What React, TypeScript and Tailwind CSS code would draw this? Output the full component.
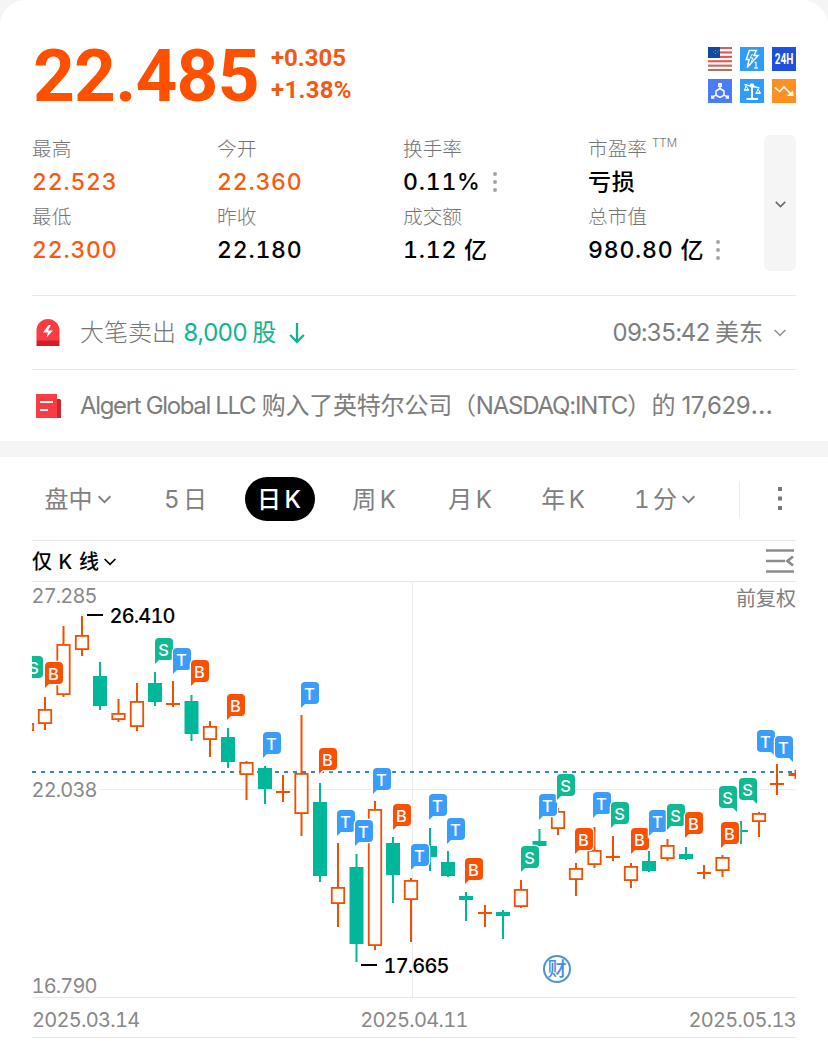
import { useState } from 'react';

type Signal = 'B' | 'S' | 'T';

interface Candle {
  x: number;
  high: number;
  top: number;
  bottom: number;
  low: number;
  up: boolean;
}

interface Marker {
  x: number;
  y: number;
  type: Signal;
  right?: boolean;
}

const UP = '#f25000';
const DOWN = '#00b899';

const signalColors: Record<Signal, string> = {
  B: '#fb5000',
  S: '#0fba93',
  T: '#3a9dfb',
};

// [x, high, top, bottom, low, up]
const candles: Candle[] = (
  [
    [27, 723, 723, 731, 731, 1],
    [45, 697, 709, 724, 730, 1],
    [63.5, 626, 644, 695, 697, 1],
    [82, 616, 635, 650, 656, 1],
    [100, 662, 676, 706, 710, 0],
    [118.5, 699, 713, 720, 722, 1],
    [137, 683, 701, 727, 731, 1],
    [155, 672, 683, 702, 706, 0],
    [173, 681, 703, 705, 707, 1],
    [191.5, 695, 701, 734, 741, 0],
    [210, 721, 726, 740, 757, 1],
    [228, 728, 737, 762, 768, 0],
    [246.5, 761, 762, 775, 800, 1],
    [265, 766, 768, 789, 804, 0],
    [283, 775, 791, 793, 802, 1],
    [301.5, 715, 773, 814, 836, 1],
    [320, 783, 802, 876, 882, 0],
    [338, 843, 887, 904, 927, 1],
    [356.5, 854, 867, 944, 962, 0],
    [375, 801, 809, 946, 950, 1],
    [393, 837, 843, 875, 903, 0],
    [411, 878, 880, 900, 942, 1],
    [430, 828, 846, 857, 871, 0],
    [448, 851, 862, 876, 877, 0],
    [466, 892, 896, 900, 921, 0],
    [485, 905, 912, 914, 927, 1],
    [503, 910, 912, 916, 939, 0],
    [521, 880, 889, 907, 908, 1],
    [539.5, 829, 841, 846, 846, 0],
    [558, 808, 811, 829, 835, 1],
    [576, 863, 868, 880, 896, 1],
    [594.5, 827, 850, 865, 868, 1],
    [613, 836, 856, 858, 861, 1],
    [631, 863, 866, 881, 888, 1],
    [649, 851, 861, 871, 872, 0],
    [667.5, 839, 845, 859, 861, 1],
    [686, 847, 854, 859, 860, 0],
    [704, 865, 872, 874, 879, 1],
    [722.5, 855, 857, 871, 877, 1],
    [741, 821, 830, 832, 844, 0],
    [759, 812, 813, 822, 837, 1],
    [777, 764, 783, 785, 795, 1],
    [795.5, 770, 773, 776, 779, 1],
  ] as number[][]
).map(([x, high, top, bottom, low, up]) => ({ x, high, top, bottom, low, up: up === 1 }));

const markers: Marker[] = [
  { x: 25, y: 656, type: 'S' },
  { x: 45, y: 662, type: 'B' },
  { x: 155, y: 638, type: 'S' },
  { x: 173, y: 648, type: 'T' },
  { x: 191, y: 660, type: 'B' },
  { x: 227, y: 694, type: 'B' },
  { x: 263, y: 732, type: 'T' },
  { x: 301, y: 682, type: 'T' },
  { x: 319, y: 748, type: 'B' },
  { x: 337, y: 810, type: 'T' },
  { x: 355, y: 820, type: 'T' },
  { x: 373, y: 768, type: 'T' },
  { x: 393, y: 804, type: 'B' },
  { x: 411, y: 844, type: 'T' },
  { x: 429, y: 794, type: 'T' },
  { x: 447, y: 818, type: 'T' },
  { x: 465, y: 858, type: 'B' },
  { x: 521, y: 846, type: 'S' },
  { x: 539, y: 794, type: 'T' },
  { x: 557, y: 774, type: 'S' },
  { x: 575, y: 828, type: 'B' },
  { x: 593, y: 792, type: 'T' },
  { x: 611, y: 802, type: 'S' },
  { x: 631, y: 828, type: 'B' },
  { x: 649, y: 810, type: 'T' },
  { x: 667, y: 804, type: 'S' },
  { x: 685, y: 812, type: 'B' },
  { x: 721, y: 822, type: 'B' },
  { x: 719, y: 786, type: 'S', right: true },
  { x: 739, y: 778, type: 'S', right: true },
  { x: 757, y: 730, type: 'T', right: true },
  { x: 775, y: 736, type: 'T', right: true },
];

const stats = [
  { label: '最高', value: '22.523', up: true },
  { label: '今开', value: '22.360', up: true },
  { label: '换手率', value: '0.11%', more: true },
  { label: '市盈率', sup: 'TTM', value: '亏损' },
  { label: '最低', value: '22.300', up: true },
  { label: '昨收', value: '22.180' },
  { label: '成交额', value: '1.12 亿' },
  { label: '总市值', value: '980.80 亿', more: true },
];

const tabs = [
  { id: 'intraday', text: '盘中', menu: true },
  { id: '5d', text: '5 日' },
  { id: 'day', text: '日 K' },
  { id: 'week', text: '周 K' },
  { id: 'month', text: '月 K' },
  { id: 'year', text: '年 K' },
  { id: '1m', text: '1 分', menu: true },
];

function Chevron({ className }: { className: string }) {
  return (
    <svg viewBox="0 0 12 8" className={className} fill="none" stroke="currentColor" strokeWidth="1.7">
      <path d="M0.600 1 6 6.400 11.400 1" />
    </svg>
  );
}

function Dots({ className }: { className: string }) {
  return (
    <svg viewBox="0 0 4 20" className={className} fill="currentColor">
      <circle cx="2" cy="2" r="2" />
      <circle cx="2" cy="10" r="2" />
      <circle cx="2" cy="18" r="2" />
    </svg>
  );
}

function Badges() {
  return (
    <div className="grid grid-cols-3 gap-2">
      {/* US flag */}
      <svg viewBox="0 0 24 24" className="size-6">
        <rect width="24" height="24" fill="#fff" />
        {[0, 4.4, 8.8, 13.2, 17.6, 22].map((y, i) => (
          <rect key={y} y={y} width="24" height="2.1" fill={i > 3 || i < 1 ? '#c4685f' : '#e8544c'} />
        ))}
        <rect width="12" height="11" fill="#0d4aa0" />
        <path d="M5 5h1M7 3.500h1M9 5h1M7 6.500h1M10.500 3.500h.8" stroke="#7fa3d6" strokeWidth="0.8" />
      </svg>
      {/* Level 1 quotes */}
      <svg viewBox="0 0 24 24" className="size-6">
        <rect width="24" height="24" fill="#2d9df8" />
        <path d="M9.300 3.500h7l-2.300 5h4L7.200 20.500l2-8H6.300z" fill="none" stroke="#fff" strokeWidth="1.500" />
        <path d="M12.500 7 10 11h2.800l-1.500 4" fill="none" stroke="#fff" strokeWidth="1" />
        <path d="M14.500 15.500h1.500V21M14 21h4" fill="none" stroke="#dff1ff" strokeWidth="1.300" />
      </svg>
      {/* Overnight trading */}
      <svg viewBox="0 0 24 24" className="size-6">
        <rect width="24" height="24" fill="#1d50dc" />
        <text transform="translate(12 17) scale(0.720 1)" textAnchor="middle" fill="#fff" fontFamily="Roboto, sans-serif" fontWeight="700" fontSize="14">
          24H
        </text>
      </svg>
      {/* Derivatives */}
      <svg viewBox="0 0 24 24" className="size-6" fill="none" stroke="#fff">
        <rect width="24" height="24" fill="#4a7bf9" stroke="none" />
        <path d="M12 9.500 16 12v4.200l-4 2.300-4-2.300V12z" strokeWidth="1.500" />
        <path d="M12 7v3M8 16l-3 2M16 16l3 2" strokeWidth="1.500" />
        <path d="M10 4h4v4h-4zM3 16.500h3.200v3.200H3zM17.800 16.500H21v3.200h-3.200z" fill="#fff" stroke="none" />
      </svg>
      {/* Margin */}
      <svg viewBox="0 0 24 24" className="size-6" fill="none" stroke="#fff">
        <rect width="24" height="24" fill="#2d9df8" stroke="none" />
        <path d="M12 6v13.500M6.500 20h11.500" strokeWidth="1.900" />
        <path d="M4.500 5.500 19.500 9" strokeWidth="1.500" />
        <circle cx="12" cy="6.500" r="2.300" fill="#fff" stroke="none" />
        <path d="M6 7 4.500 11h4zM18 10l-1.700 4h4z" strokeWidth="1" />
        <path d="M4 11h5M15.500 14.300h5" strokeWidth="1.500" />
      </svg>
      {/* Short selling */}
      <svg viewBox="0 0 24 24" className="size-6" fill="none" stroke="#fff">
        <rect width="24" height="24" fill="#fc9122" stroke="none" />
        <path d="M3 8.500 7.500 12.500 12 8l7.500 7.500" strokeWidth="1.600" />
        <path d="M21.500 17h-7l6.500-5.500z" fill="#fff" stroke="none" />
      </svg>
    </div>
  );
}

function KLineChart() {
  return (
    <svg viewBox="32 582 764 415" className="block h-[415px] w-[764px]">
      <g stroke="#ececec" strokeWidth="1">
        <path d="M412.500 582v415M100 789.500H796" />
      </g>
      <path d="M32 772H796" stroke="#3487b4" strokeWidth="2" strokeDasharray="4 5" />

      {candles.map(c => {
        const color = c.up ? UP : DOWN;
        const flat = c.bottom - c.top <= 3;
        return (
          <g key={c.x}>
            <rect x={c.x - 1} y={c.high} width="2" height={c.low - c.high} fill={color} />
            {c.up && !flat ? (
              <rect x={c.x - 6.2} y={c.top + 0.9} width="12.400" height={c.bottom - c.top - 1.8} fill="#fff" stroke={color} strokeWidth="1.800" />
            ) : (
              <rect x={c.x - 7} y={c.top} width="14" height={c.bottom - c.top} fill={color} />
            )}
          </g>
        );
      })}

      {markers.map(m => (
        <g key={`${m.x}-${m.y}`} transform={`translate(${m.x} ${m.y})`}>
          <path
            d={
              m.right
                ? 'M4 0h10a4 4 0 0 1 4 4v22l-4-4H4a4 4 0 0 1-4-4V4a4 4 0 0 1 4-4z'
                : 'M4 0h10a4 4 0 0 1 4 4v14a4 4 0 0 1-4 4H4l-4 4V4a4 4 0 0 1 4-4z'
            }
            fill={signalColors[m.type]}
            stroke="#fff"
            strokeWidth="2.500"
            paintOrder="stroke"
          />
          <text x="8.500" y="17.500" textAnchor="middle" fill="#fff" fontFamily="Inter, sans-serif" fontWeight="500" fontSize="16.500">
            {m.type}
          </text>
        </g>
      ))}

      <g fontFamily="Inter, sans-serif" fontSize="20" fill="#888">
        <text x="31.500" y="603" textLength="66">27.285</text>
        <text x="31.500" y="797" textLength="66">22.038</text>
        <text x="31.500" y="993" textLength="66">16.790</text>
      </g>
      <g fontFamily="Inter, sans-serif" fontSize="20" fontWeight="500" fill="#000">
        <path d="M87 615h16M361 965h16" stroke="#000" strokeWidth="2" />
        <text x="109.500" y="623" textLength="66">26.410</text>
        <text x="383.500" y="973" textLength="66">17.665</text>
      </g>
      <text x="736" y="605.500" textLength="60" fontFamily="'Noto Sans CJK SC', sans-serif" fontSize="20" fill="#808080">
        前复权
      </text>

      {/* Earnings marker */}
      <circle cx="557" cy="969" r="13" fill="#fff" stroke="#4c93cf" strokeWidth="2" />
      <text x="557" y="976" textAnchor="middle" fontFamily="'Noto Sans CJK SC', sans-serif" fontSize="19" fontWeight="500" fill="#3f8fe0">
        财
      </text>
    </svg>
  );
}

export default function App() {
  const [activeTab, setActiveTab] = useState('day');

  return (
    <div className="h-[1055px] w-[828px] overflow-hidden bg-[#f5f5f5] font-['Inter','Noto_Sans_CJK_SC',sans-serif] text-black tabular-nums">
      {/* Quote */}
      <section className="h-[441px] rounded-t-[26px] bg-white px-8">
        <div className="flex h-[132px] items-start pt-[42px]">
          <div className="ml-px w-[238px] pt-px font-['Roboto'] text-[73px] leading-[66px] font-bold tracking-[-0.800px] text-[#ff5000]">
            22.485
          </div>
          <div className="font-['Roboto','Inter'] text-[24px] leading-8 font-bold text-[#f25a14]">
            <div>+0.305</div>
            <div className="tracking-[0.300px]">+1.38%</div>
          </div>
          <div className="mt-[5px] ml-auto">
            <Badges />
          </div>
        </div>

        <div className="flex h-[163px] justify-between">
          <div className="grid h-[136px] grid-cols-[185px_186px_185px_176px]">
            {stats.map(s => (
              <div key={s.label}>
                <div className="flex h-[34px] items-center pt-[2px] text-[19.700px] font-light text-[#757575]">
                  {s.label}
                  {s.sup && <span className="mb-[12px] ml-[5px] text-[11.500px]">{s.sup}</span>}
                </div>
                <div
                  className={`flex h-[34px] items-center pb-[2px] text-[23px] font-medium tracking-[0.800px] ${
                    s.up ? 'text-[#f85a10]' : 'text-black'
                  }`}
                >
                  {s.value}
                  {s.more && <Dots className="ml-3 h-5 w-1 text-[#a3a3a3]" />}
                </div>
              </div>
            ))}
          </div>
          <button className="mt-[3px] flex h-[136px] w-8 items-center justify-center rounded-md bg-[#f5f5f5] pt-[2px]">
            <Chevron className="h-[7px] w-[11px] text-[#666]" />
          </button>
        </div>

        <div className="flex h-[74px] items-center border-t border-[#e8e8e8] text-[24px] font-light text-[#757575]">
          <svg viewBox="0 0 24 27" className="ml-1 h-[27px] w-6">
            <path d="M0.500 22V11.500a11.500 11.500 0 0 1 23 0V22z" fill="#fb3c44" />
            <rect x="0.500" y="21.500" width="23" height="5.500" rx="0.500" fill="#cf1f2b" />
            <path d="M12.500 6 7 13.500h5L10.500 18.500 17 11.500h-5L15 6z" fill="#fff" />
          </svg>
          <span className="ml-5 pt-px">大笔卖出</span>
          <span className="ml-[7px] pt-px font-normal text-[#0db48e]">
            <span className="tracking-[-1px]">8,000 </span>股
          </span>
          <svg viewBox="0 0 16 22" className="ml-[13px] h-[22px] w-4" fill="none" stroke="#0db48e" strokeWidth="2.300">
            <path d="M8 1v19M1.200 13 8 20l6.800-7" />
          </svg>
          <span className="ml-auto pt-px font-normal text-[#7d7d7d]">
            <span className="tracking-[-1.100px]">09:35:42 </span>美东
          </span>
          <Chevron className="mr-[10px] ml-[11px] h-2 w-3 text-[#999]" />
        </div>

        <div className="flex h-[72px] items-center border-t border-[#e8e8e8] text-[24px] text-[#7d7d7d]">
          <svg viewBox="0 0 26 24" className="ml-1 h-6 w-[26px] shrink-0">
            <path d="M20 5h4l1 1v18h-5z" fill="#cf2630" />
            <path d="M0 0h21v24H0z" fill="#fb3c44" />
            <path d="M4 8h13M4 16h8" stroke="#fff" strokeWidth="2" />
          </svg>
          <span className="ml-[18px] pb-[2px] whitespace-nowrap tracking-[-1.350px] proportional-nums">
            Algert Global LLC <span className="ml-px tracking-[-0.200px]">购入了英特尔公司（</span>
            <span className="tracking-[-1.200px]">NASDAQ:INTC</span>
            <span className="tracking-[0.500px]">）的</span> <span className="tracking-[-0.350px]">17,629</span>
            <span className="text-[26px] tracking-normal">…</span>
          </span>
        </div>
      </section>

      {/* Chart */}
      <section className="mt-4 h-[598px] bg-white px-8">
        <div className="flex h-[83px] items-center">
          <div className="grid grid-cols-[93px_121px_68px_120px_72px_114px_91px]">
            {tabs.map(tab => (
              <button
                key={tab.id}
                onClick={() => setActiveTab(tab.id)}
                className={`flex h-11 items-center justify-center rounded-full pt-[2px] text-[24px] [word-spacing:-3px] whitespace-nowrap ${
                  activeTab === tab.id ? '-mx-px bg-black pr-[2px] font-medium text-white' : 'text-[#808080]'
                } ${tab.menu ? 'pr-[2px]' : ''}`}
              >
                {tab.text}
                {tab.menu && <Chevron className="ml-[5px] h-[9px] w-[13px]" />}
              </button>
            ))}
          </div>
          <div className="ml-[28px] h-9 w-px bg-[#ececec]" />
          <svg viewBox="0 0 4 23" className="ml-[38px] h-[23px] w-1" fill="#777">
            <path d="M0 0h4v4H0zM0 9.500h4v4H0zM0 19h4v4H0z" />
          </svg>
        </div>

        <div className="flex h-[41px] items-center justify-between border-t border-[#e8e8e8]">
          <button className="flex items-center pt-[2px] text-[20px] font-medium [word-spacing:1.200px]">
            仅 K 线
            <Chevron className="ml-[5px] h-2 w-3" />
          </button>
          <svg viewBox="0 0 28 24" className="mr-[2px] h-6 w-7" fill="none" stroke="#8c8c8c" strokeWidth="2.500">
            <path d="M0 1.500h28M0 12h19M0 22.500h28" />
            <path d="M27 7.500 21.500 12l5.500 4.500" strokeWidth="2.800" />
          </svg>
        </div>

        <div className="border-y border-[#e8e8e8]">
          <KLineChart />
        </div>

        <div className="flex h-[40px] items-center justify-between border-b border-[#e8e8e8] pt-[4px] text-[20px] tracking-[-0.700px] text-[#888]">
          <span>2025.03.14</span>
          <span>2025.04.11</span>
          <span>2025.05.13</span>
        </div>
      </section>
    </div>
  );
}
